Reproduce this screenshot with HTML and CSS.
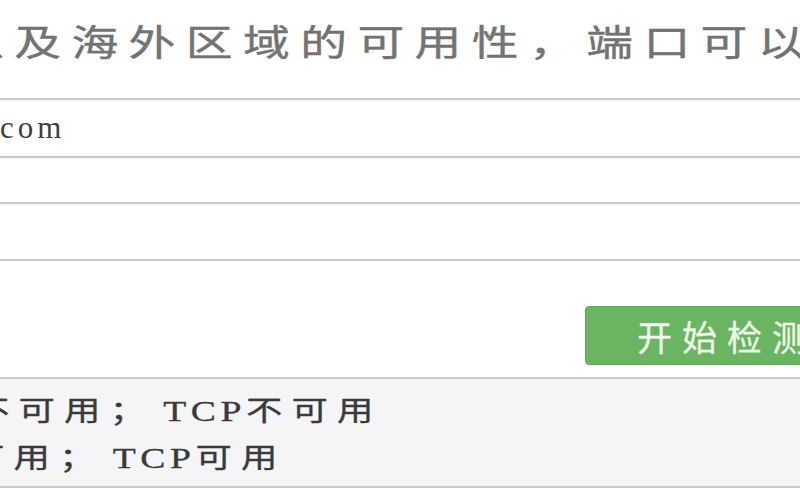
FILE: index.html
```html
<!DOCTYPE html>
<html lang="zh-CN">
<head>
<meta charset="utf-8">
<title>端口检测</title>
<link rel="stylesheet" href="styles.css">
</head>
<body>
<div class="page">
  <p class="title"><span class="wide">以及海外区域的可用性，端口可以</span></p>
  <div class="fields">
    <input class="field field-host" type="text" value="com">
    <input class="field field-port" type="text" value="">
    <input class="field field-extra" type="text" value="">
  </div>
  <div class="actions">
    <button class="btn-start" type="button">开始检测</button>
  </div>
  <div class="result">
    <p class="result-line"><span class="wide">不可用；<span class="sp"> </span><span class="latin">TCP</span>不可用</span></p>
    <p class="result-line result-line-second"><span class="wide">可用；<span class="sp"> </span><span class="latin">TCP</span>可用</span></p>
  </div>
</div>
</body>
</html>
```
FILE: styles.css
```css
html, body {
  margin: 0;
  padding: 0;
}
body {
  width: 800px;
  height: 500px;
  overflow: hidden;
  background: #ffffff;
  font-family: "Liberation Serif", "Noto Sans CJK SC", serif;
}
.page {
  margin-left: -200px;
  width: 1100px;
}
.wide {
  display: inline-block;
  transform: scaleX(1.3);
  transform-origin: 0 50%;
  white-space: nowrap;
}
.title {
  margin: 0;
  box-sizing: border-box;
  height: 98px;
  padding: 22px 0 0 157px;
  font-family: "Noto Sans CJK SC", sans-serif;
  font-size: 36px;
  line-height: 36px;
  letter-spacing: 8px;
  color: #737373;
  -webkit-text-stroke: 0.4px #737373;
  white-space: nowrap;
}
.fields {
  border-bottom: 2px solid #cbcbcb;
}
.field {
  display: block;
  width: 100%;
  box-sizing: border-box;
  margin: 0;
  border: 0;
  border-top: 2px solid #cbcbcb;
  box-shadow: inset 0 1px 1px rgba(0, 0, 0, 0.05);
  padding: 0 0 0 200px;
  background: #ffffff;
  font-family: "Liberation Serif", "Noto Sans CJK SC", serif;
  font-size: 31px;
  letter-spacing: 4px;
  color: #404040;
  outline: none;
}
.field-host { height: 58px; }
.field-port { height: 46px; }
.field-extra { height: 57px; }
.actions {
  display: flex;
  padding-left: 785px;
  margin-top: 45px;
}
.btn-start {
  box-sizing: border-box;
  height: 59px;
  padding: 0 51px;
  border: 1px solid #5ea957;
  border-radius: 4px;
  background: #6bb462;
  color: #eef8ea;
  -webkit-text-stroke: 0.3px #eef8ea;
  font-family: "Noto Sans CJK SC", sans-serif;
  font-size: 35px;
  line-height: 1;
  letter-spacing: 10px;
  white-space: nowrap;
}
.result {
  margin-top: 12px;
  box-sizing: border-box;
  height: 111px;
  border-top: 2px solid #cbcbcb;
  border-bottom: 2px solid #cbcbcb;
  background: #f5f5f7;
  padding: 8px 0 0 173px;
}
.result-line {
  margin: 0;
  font-family: "Noto Sans CJK SC", sans-serif;
  font-size: 28px;
  line-height: 45px;
  letter-spacing: 7px;
  color: #3a3a3a;
  -webkit-text-stroke: 0.3px #3a3a3a;
  white-space: nowrap;
}
.result-line-second {
  margin-left: -5px;
}
.sp {
  letter-spacing: 0;
}
.latin {
  font-family: "Liberation Serif", serif;
  font-size: 29px;
  letter-spacing: 3.5px;
}
```
